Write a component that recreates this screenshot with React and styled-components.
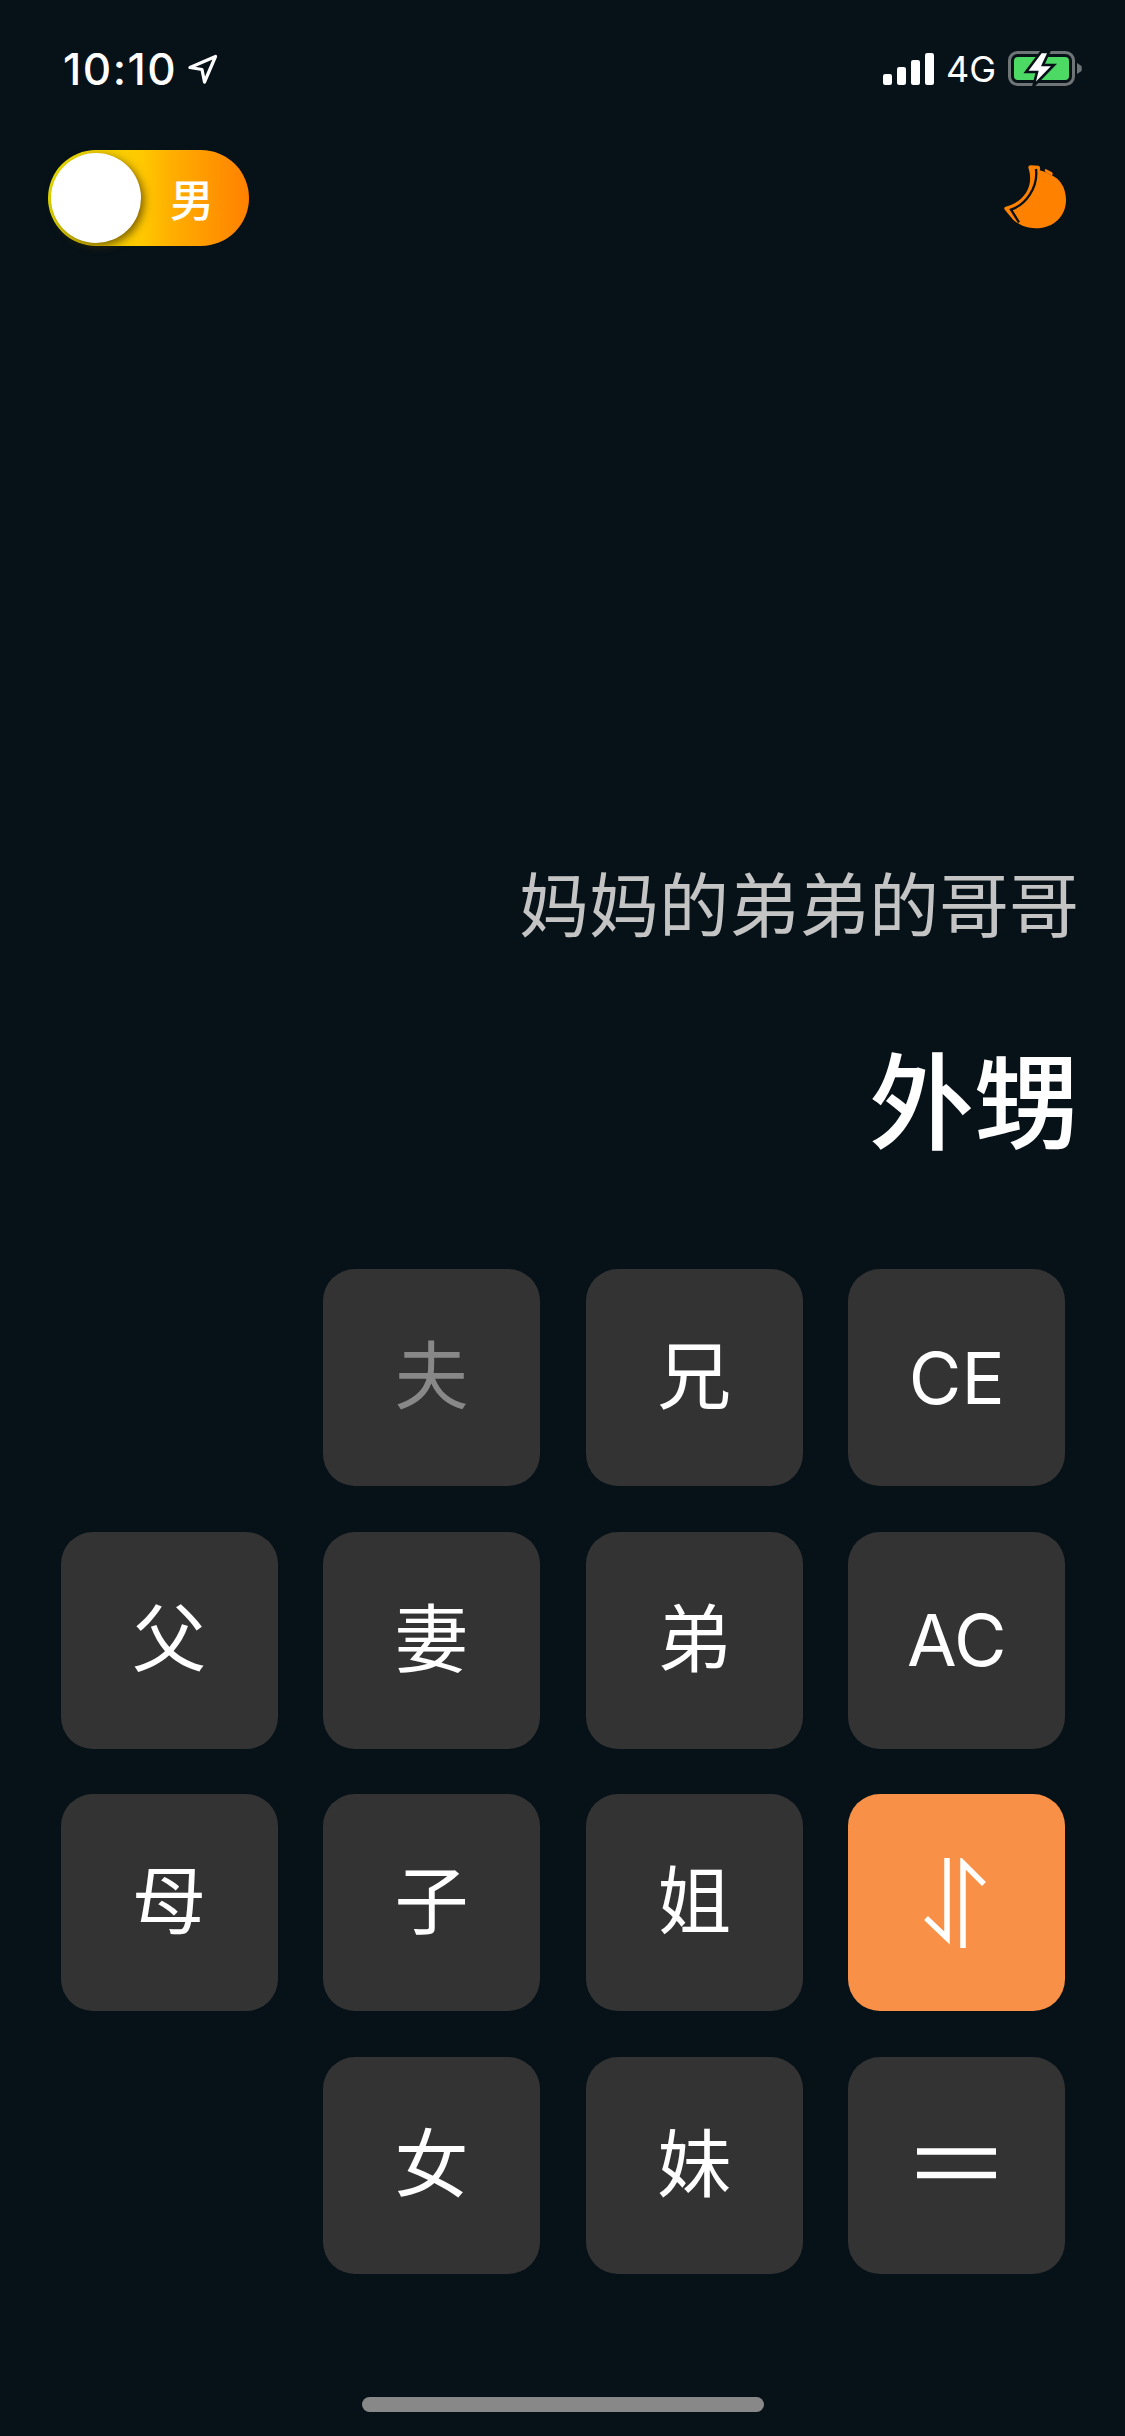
import React from 'react'
import styled, { createGlobalStyle } from 'styled-components'

const CJK = `"Noto Sans CJK SC", "Noto Sans", sans-serif`
const BG = '#071218'

const KEYS = [
    { id: 'blank-1', blank: true },
    { id: 'husband', label: '夫', muted: true },
    { id: 'elder-brother', label: '兄' },
    { id: 'ce', label: 'CE', latin: true },
    { id: 'father', label: '父' },
    { id: 'wife', label: '妻' },
    { id: 'younger-brother', label: '弟' },
    { id: 'ac', label: 'AC', latin: true },
    { id: 'mother', label: '母' },
    { id: 'son', label: '子' },
    { id: 'elder-sister', label: '姐' },
    { id: 'swap', icon: 'swap', accent: true },
    { id: 'blank-2', blank: true },
    { id: 'daughter', label: '女' },
    { id: 'younger-sister', label: '妹' },
    { id: 'equals', icon: 'equals' },
]

function LocationIcon() {
    return (
        <LocationSvg viewBox="0 0 30 30">
            <path d="M2 13.5 L27.5 2.5 L16.5 28 L14 15.5 Z" fill="none" stroke="#fff" strokeWidth="3.2" strokeLinejoin="round" />
        </LocationSvg>
    )
}

function SignalIcon() {
    return (
        <SignalSvg viewBox="0 0 51 32">
            <rect x="0" y="21" width="9" height="11" rx="2.2" fill="#fff" />
            <rect x="14" y="14" width="9" height="18" rx="2.2" fill="#fff" />
            <rect x="28" y="7" width="9" height="25" rx="2.2" fill="#fff" />
            <rect x="42" y="0" width="9" height="32" rx="2.2" fill="#fff" />
        </SignalSvg>
    )
}

function BatteryIcon() {
    return (
        <BatterySvg viewBox="0 0 74 36">
            <rect x="1.5" y="1.5" width="64" height="32" rx="8" fill="none" stroke="#6f7577" strokeWidth="3" />
            <rect x="6" y="6" width="55" height="23" rx="4" fill="#4cd964" />
            <path d="M69 12 L73.5 15 Q74 17.500 73.500 20 L69 23 Z" fill="#6f7577" />
            <path d="M33 1 L18 21 L29 21 L25.500 35 L46 14 L35 14 L41 1 Z" fill="#fff" stroke={BG} strokeWidth="2.6" strokeLinejoin="miter" />
        </BatterySvg>
    )
}

function MoonIcon() {
    return (
        <MoonSvg viewBox="0 0 240 240">
            <path d="M100 38 Q100 31 108 31 L131 32 Q138 36 134 46 C150 50 168 58 185 70 C203 85 213 108 213 135 C213 182 178 220 122 220 C95 220 72 210 55 195 L30 165 Q24 158 32 155 C75 145 118 105 102 44 Z" fill="#ff8100" />
            <path d="M123 42 C130 100 90 150 48 164 L72 202" fill="none" stroke={BG} strokeWidth="7" />
            <path d="M152 42 L171 52 Q176 58 170 61 L152 52 Q146 45 152 42 Z" fill="#ff8100" />
        </MoonSvg>
    )
}

function SwapIcon() {
    return (
        <KeySvg viewBox="0 0 65 90">
            <path d="M2 60 L23 80 V0 M39 90 V5 L60 26" fill="none" stroke="#fff" strokeWidth="5.5" />
        </KeySvg>
    )
}

function EqualsIcon() {
    return (
        <KeySvg viewBox="0 0 79 35">
            <path d="M0 3.500 H79 M0 27 H79" fill="none" stroke="#fff" strokeWidth="6.5" />
        </KeySvg>
    )
}

function App() {
    return (
        <Page>
            <GlobalStyle />
            <StatusBar>
                <TimeGroup>
                    <Time>10:10</Time>
                    <LocationIcon />
                </TimeGroup>
                <StatusIcons>
                    <SignalIcon />
                    <Network>4G</Network>
                    <BatteryIcon />
                </StatusIcons>
            </StatusBar>
            <Toolbar>
                <GenderSwitch>
                    <SwitchKnob />
                    <SwitchLabel>男</SwitchLabel>
                </GenderSwitch>
                <MoonIcon />
            </Toolbar>
            <Display>
                <Expression>妈妈的弟弟的哥哥</Expression>
                <Result>外甥</Result>
            </Display>
            <Keypad>
                {KEYS.map((key) => {
                    if (key.blank) return <span key={key.id} />
                    return (
                        <Key key={key.id} $accent={key.accent} $muted={key.muted} $latin={key.latin} $cjk={!!key.label && !key.latin}>
                            {key.label}
                            {key.icon === 'swap' && <SwapIcon />}
                            {key.icon === 'equals' && <EqualsIcon />}
                        </Key>
                    )
                })}
            </Keypad>
            <HomeBarRow>
                <HomeBar />
            </HomeBarRow>
        </Page>
    )
}

const GlobalStyle = createGlobalStyle`
    html, body {
        margin: 0;
        padding: 0;
        background: ${BG};
    }
`

const Page = styled.div`
    width: 1125px;
    height: 2436px;
    display: flex;
    flex-direction: column;
    background: ${BG};
    color: #fff;
    font-family: ${CJK};
    overflow: hidden;
`

const StatusBar = styled.div`
    height: 52px;
    margin-top: 43px;
    padding: 0 43px 0 63px;
    display: flex;
    align-items: center;
    justify-content: space-between;
`

const TimeGroup = styled.div`
    display: flex;
    align-items: center;
    gap: 11px;
`

const Time = styled.span`
    font-family: Inter, "Liberation Sans", sans-serif;
    font-size: 44px;
    font-weight: 500;
    line-height: 52px;
    letter-spacing: 1.5px;
`

const LocationSvg = styled.svg`
    width: 30px;
    height: 30px;
`

const StatusIcons = styled.div`
    display: flex;
    align-items: center;
`

const SignalSvg = styled.svg`
    width: 51px;
    height: 32px;
`

const Network = styled.span`
    margin: 0 12px 0 12px;
    font-family: Inter, "Liberation Sans", sans-serif;
    font-size: 36px;
    line-height: 52px;
`

const BatterySvg = styled.svg`
    width: 74px;
    height: 36px;
`

const Toolbar = styled.div`
    margin-top: 55px;
    padding: 0 50px 0 48px;
    display: flex;
    align-items: flex-start;
    justify-content: space-between;
`

const GenderSwitch = styled.div`
    width: 201px;
    height: 96px;
    box-sizing: border-box;
    padding: 3px 0 3px 3px;
    display: flex;
    align-items: center;
    border-radius: 48px;
    background: linear-gradient(90deg, #e8e000 0%, #ffc800 47%, #ffae00 62%, #ff9600 82%, #ff8000 100%);
`

const SwitchKnob = styled.div`
    width: 90px;
    height: 90px;
    border-radius: 50%;
    background: #fff;
    box-shadow: 3px 3px 8px rgba(70, 50, 0, 0.7);
`

const SwitchLabel = styled.span`
    margin-left: 29px;
    font-size: 44px;
    font-weight: 500;
    line-height: 1;
`

const MoonSvg = styled.svg`
    width: 80px;
    height: 80px;
    margin-top: 5px;
`

const Display = styled.div`
    flex: 1;
    display: flex;
    flex-direction: column;
    align-items: flex-end;
    justify-content: flex-end;
    padding: 0 46px 114px 0;
`

const Expression = styled.div`
    font-size: 70px;
    font-weight: 400;
    line-height: 84px;
    color: #c4c4c4;
`

const Result = styled.div`
    margin-top: 91px;
    font-size: 105px;
    font-weight: 500;
    line-height: 120px;
`

const Keypad = styled.div`
    display: grid;
    grid-template-columns: repeat(4, 217px);
    grid-auto-rows: 217px;
    gap: 45.6px;
    padding-left: 60.5px;
`

const Key = styled.div`
    display: flex;
    align-items: center;
    justify-content: center;
    box-sizing: border-box;
    padding-bottom: ${(props) => (props.$cjk ? '13px' : '0')};
    border-radius: 32px;
    background: ${(props) => (props.$accent ? '#f89147' : '#333333')};
    color: ${(props) => (props.$muted ? '#888888' : '#ffffff')};
    font-family: ${(props) => (props.$latin ? `Inter, "Liberation Sans", sans-serif` : CJK)};
    font-size: ${(props) => (props.$latin ? '72px' : '74px')};
    font-weight: 400;
    line-height: 1;
`

const KeySvg = styled.svg`
    width: ${(props) => props.viewBox.split(' ')[2]}px;
    height: ${(props) => props.viewBox.split(' ')[3]}px;
`

const HomeBarRow = styled.div`
    height: 162px;
    box-sizing: border-box;
    padding-top: 123px;
    display: flex;
    justify-content: center;
`

const HomeBar = styled.div`
    width: 402px;
    height: 15px;
    border-radius: 8px;
    background: #888888;
`

export default App
